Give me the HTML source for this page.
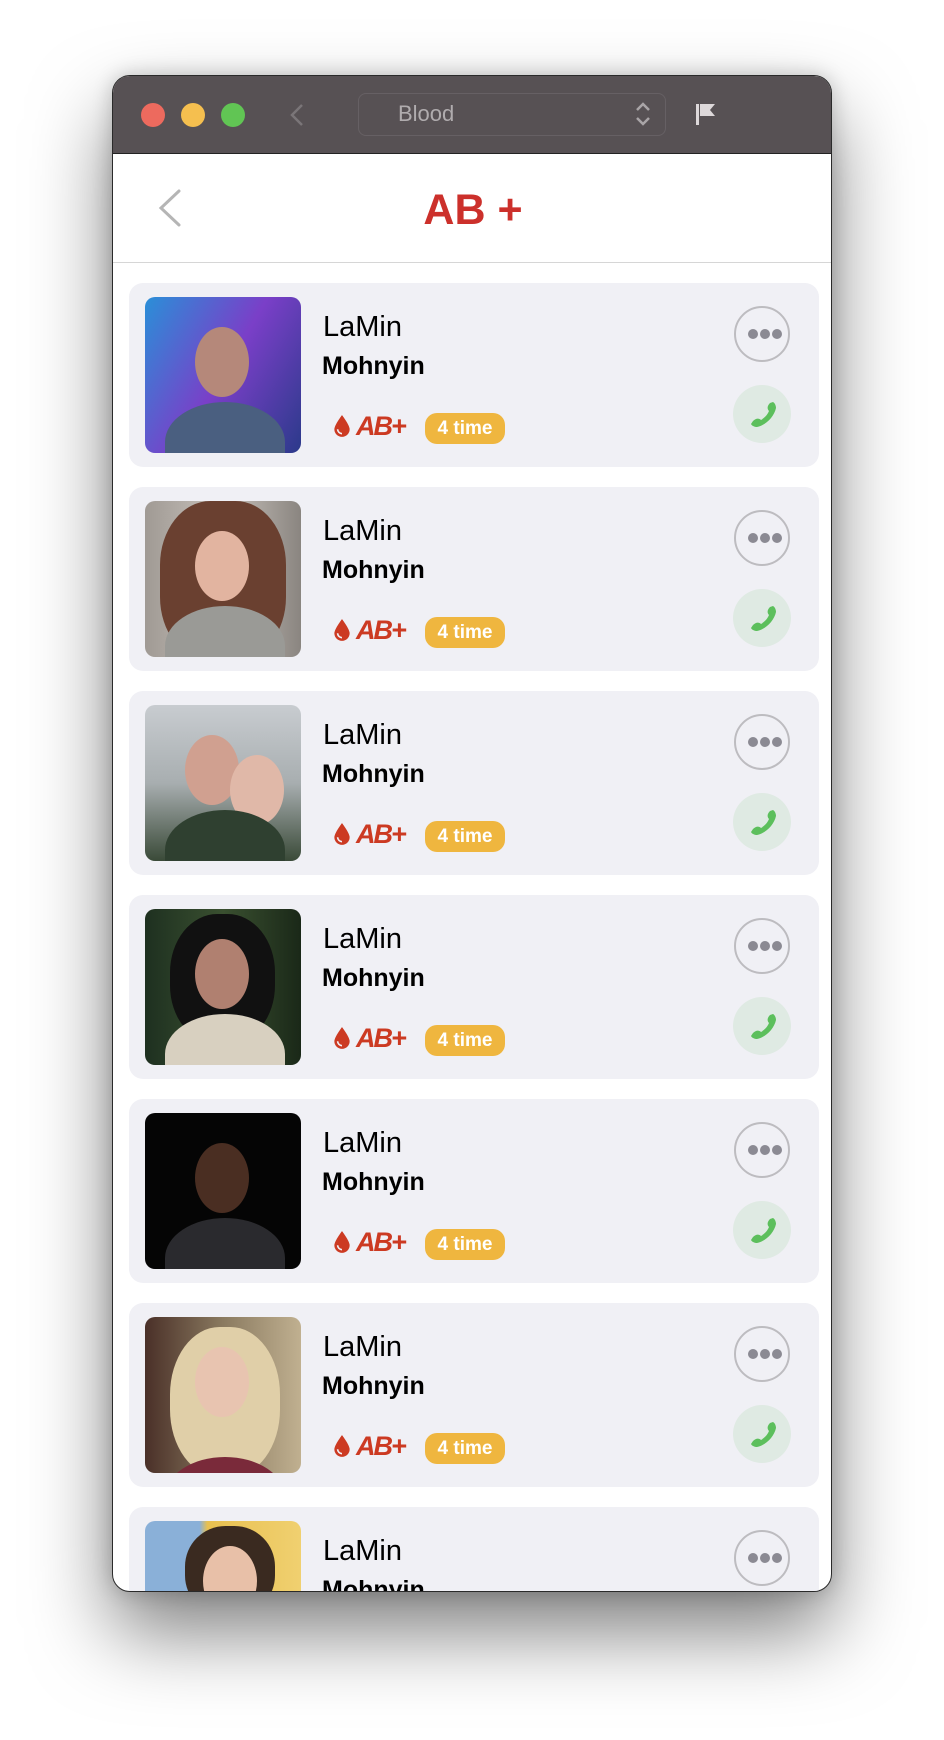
<!DOCTYPE html>
<html><head><meta charset="utf-8"><style>
*{margin:0;padding:0;box-sizing:border-box}
body{width:944px;height:1740px;background:#fff;position:relative;overflow:hidden;font-family:"Liberation Sans",Arial,sans-serif}
.win{position:absolute;left:112px;top:75px;width:720px;height:1517px;border-radius:18px;background:#fff;overflow:hidden;border:1px solid #2a2a2a;box-shadow:0 40px 80px rgba(0,0,0,.5),0 0 20px rgba(0,0,0,.2)}
.tb{position:absolute;left:0;top:0;width:100%;height:78px;background:#575154;border-bottom:1px solid #222}
.dot{position:absolute;top:27px;width:24px;height:24px;border-radius:50%}
.dd{position:absolute;left:245px;top:17px;width:308px;height:43px;border:1.5px solid #666064;border-radius:8px;color:#b0acae;font-size:22px;line-height:40px;padding-left:39px}
.hdr{position:absolute;left:0;top:78px;width:100%;height:109px;border-bottom:1.5px solid #d6d6d6}
.title{position:absolute;left:0;width:100%;top:32px;text-align:center;color:#cc302b;font-weight:bold;font-size:43px;padding-left:2px}
.card{position:absolute;left:16px;width:690px;height:184px;background:#f0f0f5;border-radius:14px;overflow:hidden}
.ph{position:absolute;left:16px;top:14px;width:156px;height:156px;border-radius:10px;overflow:hidden}
.ph .f{position:absolute;left:50px;top:30px;width:54px;height:70px;border-radius:50%}
.ph .b{position:absolute;left:20px;top:105px;width:120px;height:80px;border-radius:50% 50% 0 0}
.n1{position:absolute;left:194px;top:28px;font-size:29px;color:#000}
.n2{position:absolute;left:193px;top:69px;font-size:25px;font-weight:bold;color:#000}
.drop{position:absolute;left:204px;top:131px}
.ab{position:absolute;left:227px;top:128px;font-weight:bold;font-style:italic;color:#cc3a22;font-size:27px;letter-spacing:-2px}
.pill{position:absolute;left:296px;top:130px;width:80px;height:31px;border-radius:12px;background:#efb63f;color:#fff;font-weight:bold;font-size:19px;text-align:center;line-height:31px}
.more{position:absolute;left:605px;top:23px;width:56px;height:56px;border-radius:50%;border:2px solid #bdbcc0}
.more i{position:absolute;top:21px;width:10px;height:10px;border-radius:50%;background:#8b8a93}
.call{position:absolute;left:604px;top:102px;width:58px;height:58px;border-radius:50%;background:#dfeae3}
</style></head><body>
<div class="win">
 <div class="tb">
  <div class="dot" style="left:28px;background:#ed6a5e"></div>
  <div class="dot" style="left:68px;background:#f5bf4f"></div>
  <div class="dot" style="left:108px;background:#61c554"></div>
  <svg style="position:absolute;left:176px;top:27px" width="16" height="24"><path d="M13 2 L3 12 L13 22" stroke="#7a7578" stroke-width="2.5" fill="none"/></svg>
  <div class="dd">Blood
   <svg style="position:absolute;left:276px;top:7px" width="16" height="26"><path d="M2 9 L8 3 L14 9 M2 17 L8 23 L14 17" stroke="#a9a5a7" stroke-width="2.5" fill="none"/></svg>
  </div>
  <svg style="position:absolute;left:582px;top:27px" width="24" height="24"><rect x="1" y="1" width="3" height="21" fill="#ddd8da"/><path d="M5 1 H20 L15 7 L20 13 H5 Z" fill="#ddd8da"/></svg>
 </div>
 <div class="hdr">
  <svg style="position:absolute;left:42px;top:34px" width="28" height="40"><path d="M24 3 L6 20 L24 37" stroke="#b5b5b5" stroke-width="3" fill="none" stroke-linecap="round"/></svg>
  <div class="title">AB +</div>
 </div>

 <div class="card" style="top:207px"><div class="ph" style="background:linear-gradient(120deg,#2a8fd8,#7a3fc8 50%,#2b3a8a)"><div class="f" style="background:#b5887a"></div><div class="b" style="background:#4a5f80"></div></div>
  <div class="n1">LaMin</div><div class="n2">Mohnyin</div>
  <svg class="drop" width="18" height="24" viewBox="0 0 16 22"><path d="M8 1 C8 1 1 10 1 14 A7 7 0 0 0 15 14 C15 10 8 1 8 1Z" fill="#cc3a22"/><path d="M4 14 A4 4 0 0 0 8 18" stroke="#f0f0f5" stroke-width="1.5" fill="none"/></svg>
  <div class="ab">AB+</div><div class="pill">4 time</div>
  <div class="more"><i style="left:12px"></i><i style="left:24px"></i><i style="left:36px"></i></div>
  <div class="call"><svg width="58" height="58" viewBox="0 0 58 58"><path d="M20 36 c3-3 6-3 8-1 c6-4 7-7 8-9 c-2-2-2-5 1-8 l3-1 c2 1 3 4 3 6 c-2 9-10 17-19 19 c-2 0-5-1-6-3z" fill="#5cbf5c"/></svg></div>
 </div>

 <div class="card" style="top:411px"><div class="ph" style="background:linear-gradient(90deg,#a09a94,#c8c2bc 50%,#8a8580)"><div class="b" style="background:#6a4030;left:15px;top:0;height:160px;width:126px;border-radius:40%"></div><div class="f" style="background:#e2b4a0"></div><div class="b" style="background:#9a9a96"></div></div>
  <div class="n1">LaMin</div><div class="n2">Mohnyin</div>
  <svg class="drop" width="18" height="24" viewBox="0 0 16 22"><path d="M8 1 C8 1 1 10 1 14 A7 7 0 0 0 15 14 C15 10 8 1 8 1Z" fill="#cc3a22"/><path d="M4 14 A4 4 0 0 0 8 18" stroke="#f0f0f5" stroke-width="1.5" fill="none"/></svg>
  <div class="ab">AB+</div><div class="pill">4 time</div>
  <div class="more"><i style="left:12px"></i><i style="left:24px"></i><i style="left:36px"></i></div>
  <div class="call"><svg width="58" height="58" viewBox="0 0 58 58"><path d="M20 36 c3-3 6-3 8-1 c6-4 7-7 8-9 c-2-2-2-5 1-8 l3-1 c2 1 3 4 3 6 c-2 9-10 17-19 19 c-2 0-5-1-6-3z" fill="#5cbf5c"/></svg></div>
 </div>

 <div class="card" style="top:615px"><div class="ph" style="background:linear-gradient(180deg,#c8ccd0,#a8aeb0 50%,#3a4a38)"><div class="f" style="background:#d0a090;left:40px"></div><div class="f" style="background:#e0b8a8;left:85px;top:50px"></div><div class="b" style="background:#2f4030"></div></div>
  <div class="n1">LaMin</div><div class="n2">Mohnyin</div>
  <svg class="drop" width="18" height="24" viewBox="0 0 16 22"><path d="M8 1 C8 1 1 10 1 14 A7 7 0 0 0 15 14 C15 10 8 1 8 1Z" fill="#cc3a22"/><path d="M4 14 A4 4 0 0 0 8 18" stroke="#f0f0f5" stroke-width="1.5" fill="none"/></svg>
  <div class="ab">AB+</div><div class="pill">4 time</div>
  <div class="more"><i style="left:12px"></i><i style="left:24px"></i><i style="left:36px"></i></div>
  <div class="call"><svg width="58" height="58" viewBox="0 0 58 58"><path d="M20 36 c3-3 6-3 8-1 c6-4 7-7 8-9 c-2-2-2-5 1-8 l3-1 c2 1 3 4 3 6 c-2 9-10 17-19 19 c-2 0-5-1-6-3z" fill="#5cbf5c"/></svg></div>
 </div>

 <div class="card" style="top:819px"><div class="ph" style="background:linear-gradient(90deg,#1e3020,#3a5030 50%,#1a2818)"><div class="b" style="background:#111;left:25px;top:5px;height:130px;width:105px;border-radius:45%"></div><div class="f" style="background:#b08070"></div><div class="b" style="background:#d8d0c0"></div></div>
  <div class="n1">LaMin</div><div class="n2">Mohnyin</div>
  <svg class="drop" width="18" height="24" viewBox="0 0 16 22"><path d="M8 1 C8 1 1 10 1 14 A7 7 0 0 0 15 14 C15 10 8 1 8 1Z" fill="#cc3a22"/><path d="M4 14 A4 4 0 0 0 8 18" stroke="#f0f0f5" stroke-width="1.5" fill="none"/></svg>
  <div class="ab">AB+</div><div class="pill">4 time</div>
  <div class="more"><i style="left:12px"></i><i style="left:24px"></i><i style="left:36px"></i></div>
  <div class="call"><svg width="58" height="58" viewBox="0 0 58 58"><path d="M20 36 c3-3 6-3 8-1 c6-4 7-7 8-9 c-2-2-2-5 1-8 l3-1 c2 1 3 4 3 6 c-2 9-10 17-19 19 c-2 0-5-1-6-3z" fill="#5cbf5c"/></svg></div>
 </div>

 <div class="card" style="top:1023px"><div class="ph" style="background:#050505"><div class="f" style="background:#4a2e22"></div><div class="b" style="background:#2a2a2e"></div></div>
  <div class="n1">LaMin</div><div class="n2">Mohnyin</div>
  <svg class="drop" width="18" height="24" viewBox="0 0 16 22"><path d="M8 1 C8 1 1 10 1 14 A7 7 0 0 0 15 14 C15 10 8 1 8 1Z" fill="#cc3a22"/><path d="M4 14 A4 4 0 0 0 8 18" stroke="#f0f0f5" stroke-width="1.5" fill="none"/></svg>
  <div class="ab">AB+</div><div class="pill">4 time</div>
  <div class="more"><i style="left:12px"></i><i style="left:24px"></i><i style="left:36px"></i></div>
  <div class="call"><svg width="58" height="58" viewBox="0 0 58 58"><path d="M20 36 c3-3 6-3 8-1 c6-4 7-7 8-9 c-2-2-2-5 1-8 l3-1 c2 1 3 4 3 6 c-2 9-10 17-19 19 c-2 0-5-1-6-3z" fill="#5cbf5c"/></svg></div>
 </div>

 <div class="card" style="top:1227px"><div class="ph" style="background:linear-gradient(90deg,#4a3028,#8a7a60 50%,#c0b090)"><div class="b" style="background:#e0cfa8;left:25px;top:10px;height:150px;width:110px;border-radius:45%"></div><div class="f" style="background:#e8c4b0"></div><div class="b" style="background:#7a2a3a;top:140px"></div></div>
  <div class="n1">LaMin</div><div class="n2">Mohnyin</div>
  <svg class="drop" width="18" height="24" viewBox="0 0 16 22"><path d="M8 1 C8 1 1 10 1 14 A7 7 0 0 0 15 14 C15 10 8 1 8 1Z" fill="#cc3a22"/><path d="M4 14 A4 4 0 0 0 8 18" stroke="#f0f0f5" stroke-width="1.5" fill="none"/></svg>
  <div class="ab">AB+</div><div class="pill">4 time</div>
  <div class="more"><i style="left:12px"></i><i style="left:24px"></i><i style="left:36px"></i></div>
  <div class="call"><svg width="58" height="58" viewBox="0 0 58 58"><path d="M20 36 c3-3 6-3 8-1 c6-4 7-7 8-9 c-2-2-2-5 1-8 l3-1 c2 1 3 4 3 6 c-2 9-10 17-19 19 c-2 0-5-1-6-3z" fill="#5cbf5c"/></svg></div>
 </div>

 <div class="card" style="top:1431px"><div class="ph" style="background:linear-gradient(90deg,#8ab0d8 35%,#e8c050 40%,#f0d070)"><div class="b" style="background:#3a2a20;left:40px;top:5px;height:90px;width:90px;border-radius:45%"></div><div class="f" style="background:#e8c0a8;left:58px;top:25px"></div></div>
  <div class="n1">LaMin</div><div class="n2">Mohnyin</div>
  <div class="more"><i style="left:12px"></i><i style="left:24px"></i><i style="left:36px"></i></div>
 </div>
</div>
</body></html>
